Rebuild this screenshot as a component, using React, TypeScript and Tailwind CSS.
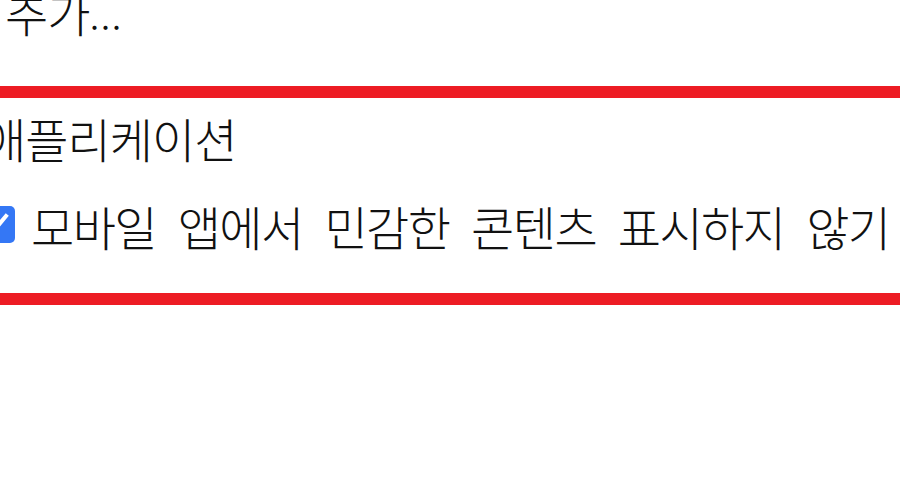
import React from "react";

export default function App() {
  return (
    <div
      className="w-[900px] h-[500px] bg-white overflow-hidden text-[#111111] font-light"
      style={{ fontFamily: '"Noto Sans CJK KR", "Noto Sans", sans-serif' }}
    >
      <div className="flex flex-col">
        <div className="-mt-[13px] h-[50px] flex items-center pl-[5px] text-[47px] tracking-[-1px] whitespace-nowrap">
          <span>추가</span>
          <span className="tracking-[1px] text-[40px]">...</span>
        </div>
        <div className="mt-[49px] h-[12px] bg-[#ed1c24]" />
        <div className="mt-[15px] h-[50px] flex items-center -ml-[17px] text-[47px] tracking-[-1px] whitespace-nowrap">
          애플리케이션
        </div>
        <div className="mt-[38px] h-[50px] flex items-center -ml-[22px]">
          <span className="w-[37px] h-[37px] mt-[-4px] rounded-[5px] bg-[#3477f5] flex items-center justify-center shrink-0">
            <svg width="28" height="28" viewBox="0 0 28 28" fill="none">
              <path d="M5 14.5 L11 20.5 L23 6" stroke="white" strokeWidth="4" strokeLinecap="square" />
            </svg>
          </span>
          <span className="ml-[16px] text-[47px] tracking-[-1.6px] [word-spacing:13px] whitespace-nowrap">
            모바일 앱에서 민감한 콘텐츠 표시하지 않기
          </span>
        </div>
        <div className="mt-[42px] h-[12px] bg-[#ed1c24]" />
      </div>
    </div>
  );
}
